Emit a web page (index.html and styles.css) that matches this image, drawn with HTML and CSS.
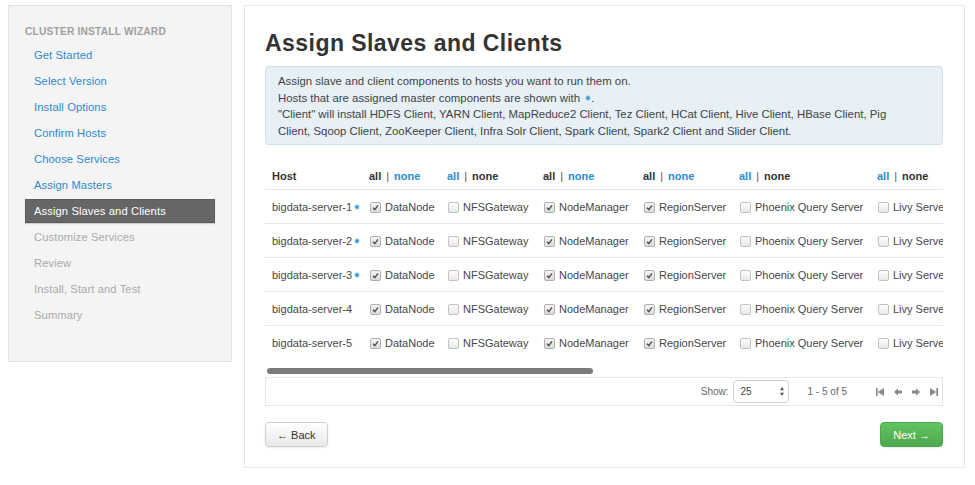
FILE: index.html
```html
<!DOCTYPE html>
<html>
<head>
<meta charset="utf-8">
<title>Assign Slaves and Clients</title>
<link rel="stylesheet" href="styles.css">
</head>
<body>
<div class="page">
  <aside class="sidebar">
    <div class="wiz-title">Cluster Install Wizard</div>
    <ul class="nav">
      <li><a href="#">Get Started</a></li>
      <li><a href="#">Select Version</a></li>
      <li><a href="#">Install Options</a></li>
      <li><a href="#">Confirm Hosts</a></li>
      <li><a href="#">Choose Services</a></li>
      <li><a href="#">Assign Masters</a></li>
      <li class="active">Assign Slaves and Clients</li>
      <li class="disabled">Customize Services</li>
      <li class="disabled">Review</li>
      <li class="disabled">Install, Start and Test</li>
      <li class="disabled">Summary</li>
    </ul>
  </aside>

  <main class="main">
    <h2 class="title">Assign Slaves and Clients</h2>
    <div class="alert">
      Assign slave and client components to hosts you want to run them on.<br>
      Hosts that are assigned master components are shown with <svg class="star" viewBox="0 0 8 8"><path d="M4 0.6V7.4M1.1 2.3L6.9 5.7M6.9 2.3L1.1 5.7"/></svg>.<br>
      "Client" will install HDFS Client, YARN Client, MapReduce2 Client, Tez Client, HCat Client, Hive Client, HBase Client, Pig<br>
      Client, Sqoop Client, ZooKeeper Client, Infra Solr Client, Spark Client, Spark2 Client and Slider Client.
    </div>

    <div class="grid-wrap">
      <table class="grid">
        <colgroup>
          <col class="c-host"><col class="c-dn"><col class="c-nfs"><col class="c-nm"><col class="c-rs"><col class="c-phx"><col class="c-livy">
        </colgroup>
        <thead>
          <tr>
            <th class="host">Host</th>
            <th><span class="sel-txt">all</span><span class="sep">|</span><a class="lnk" href="#">none</a></th>
            <th><a class="lnk" href="#">all</a><span class="sep">|</span><span class="sel-txt">none</span></th>
            <th><span class="sel-txt">all</span><span class="sep">|</span><a class="lnk" href="#">none</a></th>
            <th><span class="sel-txt">all</span><span class="sep">|</span><a class="lnk" href="#">none</a></th>
            <th><a class="lnk" href="#">all</a><span class="sep">|</span><span class="sel-txt">none</span></th>
            <th><a class="lnk" href="#">all</a><span class="sep">|</span><span class="sel-txt">none</span></th>
          </tr>
        </thead>
        <tbody>
          <tr>
            <td class="host">bigdata-server-1<svg class="star" viewBox="0 0 8 8"><path d="M4 0.6V7.4M1.1 2.3L6.9 5.7M6.9 2.3L1.1 5.7"/></svg></td>
            <td><span class="cb on"><svg viewBox="0 0 9 9"><path d="M2 4.8L3.8 6.6L7 2.4"/></svg></span>DataNode</td>
            <td><span class="cb"></span>NFSGateway</td>
            <td><span class="cb on"><svg viewBox="0 0 9 9"><path d="M2 4.8L3.8 6.6L7 2.4"/></svg></span>NodeManager</td>
            <td><span class="cb on"><svg viewBox="0 0 9 9"><path d="M2 4.8L3.8 6.6L7 2.4"/></svg></span>RegionServer</td>
            <td><span class="cb"></span>Phoenix Query Server</td>
            <td><span class="cb"></span>Livy Server</td>
          </tr>
          <tr>
            <td class="host">bigdata-server-2<svg class="star" viewBox="0 0 8 8"><path d="M4 0.6V7.4M1.1 2.3L6.9 5.7M6.9 2.3L1.1 5.7"/></svg></td>
            <td><span class="cb on"><svg viewBox="0 0 9 9"><path d="M2 4.8L3.8 6.6L7 2.4"/></svg></span>DataNode</td>
            <td><span class="cb"></span>NFSGateway</td>
            <td><span class="cb on"><svg viewBox="0 0 9 9"><path d="M2 4.8L3.8 6.6L7 2.4"/></svg></span>NodeManager</td>
            <td><span class="cb on"><svg viewBox="0 0 9 9"><path d="M2 4.8L3.8 6.6L7 2.4"/></svg></span>RegionServer</td>
            <td><span class="cb"></span>Phoenix Query Server</td>
            <td><span class="cb"></span>Livy Server</td>
          </tr>
          <tr>
            <td class="host">bigdata-server-3<svg class="star" viewBox="0 0 8 8"><path d="M4 0.6V7.4M1.1 2.3L6.9 5.7M6.9 2.3L1.1 5.7"/></svg></td>
            <td><span class="cb on"><svg viewBox="0 0 9 9"><path d="M2 4.8L3.8 6.6L7 2.4"/></svg></span>DataNode</td>
            <td><span class="cb"></span>NFSGateway</td>
            <td><span class="cb on"><svg viewBox="0 0 9 9"><path d="M2 4.8L3.8 6.6L7 2.4"/></svg></span>NodeManager</td>
            <td><span class="cb on"><svg viewBox="0 0 9 9"><path d="M2 4.8L3.8 6.6L7 2.4"/></svg></span>RegionServer</td>
            <td><span class="cb"></span>Phoenix Query Server</td>
            <td><span class="cb"></span>Livy Server</td>
          </tr>
          <tr>
            <td class="host">bigdata-server-4</td>
            <td><span class="cb on"><svg viewBox="0 0 9 9"><path d="M2 4.8L3.8 6.6L7 2.4"/></svg></span>DataNode</td>
            <td><span class="cb"></span>NFSGateway</td>
            <td><span class="cb on"><svg viewBox="0 0 9 9"><path d="M2 4.8L3.8 6.6L7 2.4"/></svg></span>NodeManager</td>
            <td><span class="cb on"><svg viewBox="0 0 9 9"><path d="M2 4.8L3.8 6.6L7 2.4"/></svg></span>RegionServer</td>
            <td><span class="cb"></span>Phoenix Query Server</td>
            <td><span class="cb"></span>Livy Server</td>
          </tr>
          <tr>
            <td class="host">bigdata-server-5</td>
            <td><span class="cb on"><svg viewBox="0 0 9 9"><path d="M2 4.8L3.8 6.6L7 2.4"/></svg></span>DataNode</td>
            <td><span class="cb"></span>NFSGateway</td>
            <td><span class="cb on"><svg viewBox="0 0 9 9"><path d="M2 4.8L3.8 6.6L7 2.4"/></svg></span>NodeManager</td>
            <td><span class="cb on"><svg viewBox="0 0 9 9"><path d="M2 4.8L3.8 6.6L7 2.4"/></svg></span>RegionServer</td>
            <td><span class="cb"></span>Phoenix Query Server</td>
            <td><span class="cb"></span>Livy Server</td>
          </tr>
        </tbody>
      </table>
    </div>
    <div class="hscroll"><div class="thumb"></div></div>

    <div class="pager">
      <span class="show">Show:</span>
      <div class="sel"><span>25</span><svg class="updown" viewBox="0 0 4 9"><path d="M2 0L4 3.3H0Z M2 9L0 5.7H4Z"/></svg></div>
      <span class="range">1 - 5 of 5</span>
      <div class="pg-icons">
        <svg viewBox="0 0 8 8"><rect x="0" y="0" width="1.7" height="8"/><path d="M1.7 4L8 0V8Z"/></svg>
        <svg viewBox="0 0 8 8"><path d="M0 4L4 0.3V2.6H8V5.4H4V7.7Z"/></svg>
        <svg viewBox="0 0 8 8"><path d="M8 4L4 0.3V2.6H0V5.4H4V7.7Z"/></svg>
        <svg viewBox="0 0 8 8"><rect x="6.3" y="0" width="1.7" height="8"/><path d="M6.3 4L0 0V8Z"/></svg>
      </div>
    </div>

    <div class="actions">
      <button class="btn">← Back</button>
      <button class="btn btn-success">Next →</button>
    </div>
  </main>
</div>
</body>
</html>
```
FILE: styles.css
```css
html, body {
  margin: 0;
  padding: 0;
  background: #fff;
}
body {
  font-family: "Liberation Sans", Arial, Helvetica, sans-serif;
  font-size: 11px;
  color: #333;
}
.page {
  display: flex;
  align-items: flex-start;
  gap: 12px;
  padding: 5px 0 0 8px;
}

/* Sidebar */
.sidebar {
  width: 224px;
  height: 357px;
  box-sizing: border-box;
  background: #f4f4f4;
  border: 1px solid #e4e4e4;
  padding: 19px 16px 0 16px;
}
.wiz-title {
  font-size: 10.2px;
  font-weight: bold;
  color: #a0a0a0;
  line-height: 14px;
  text-transform: uppercase;
  letter-spacing: 0.2px;
  margin-bottom: 4px;
}
.nav {
  list-style: none;
  margin: 0;
  padding: 0;
}
.nav li {
  height: 24px;
  line-height: 24px;
  margin-bottom: 2px;
  padding-left: 9px;
  font-size: 11.2px;
  letter-spacing: 0.1px;
}
.nav a {
  color: #2e89d0;
  text-decoration: none;
}
.nav li.active {
  background: #666;
  color: #fff;
  box-shadow: inset 0 0 0 1px #5b5b5b, 0 1px 1px rgba(0,0,0,0.15);
}
.nav li.disabled {
  color: #aaa;
}

/* Main panel */
.main {
  width: 721px;
  min-height: 463px;
  box-sizing: border-box;
  border: 1px solid #e8e8e8;
  padding: 0 21px 19px 20px;
}
.title {
  margin: 23px 0 9px;
  font-size: 23px;
  line-height: 28px;
  font-weight: bold;
  letter-spacing: 0.45px;
  color: #333;
}
.alert {
  background: #e7f0f5;
  border: 1px solid #d2e2eb;
  border-radius: 3px;
  padding: 6px 14px 5px 12px;
  line-height: 16.5px;
  font-size: 11.4px;
  color: #3e4347;
  white-space: nowrap;
}
.star {
  width: 6px;
  height: 6px;
  margin-left: 2px;
  vertical-align: 1px;
}
.star path {
  stroke: #3a9ad4;
  stroke-width: 1.7;
  fill: none;
}

/* Grid */
.grid-wrap {
  margin-top: 18px;
  width: 678px;
  overflow: hidden;
}
.grid {
  border-collapse: separate;
  border-spacing: 0;
  table-layout: fixed;
  width: 752px;
}
.c-host { width: 104px; }
.c-dn { width: 78px; }
.c-nfs { width: 96px; }
.c-nm { width: 100px; }
.c-rs { width: 96px; }
.c-phx { width: 138px; }
.c-livy { width: 140px; }
.grid th {
  height: 26px;
  padding: 0;
  text-align: left;
  vertical-align: middle;
  font-weight: bold;
  color: #333;
  border-bottom: 1px solid #e3e3e3;
  white-space: nowrap;
}
.grid th.host {
  padding-left: 7px;
}
.grid td {
  height: 33px;
  padding: 0;
  vertical-align: middle;
  color: #474747;
  border-bottom: 1px solid #e6e6e6;
  white-space: nowrap;
}
.grid tbody tr:last-child td {
  border-bottom: none;
}
.grid td.host {
  padding-left: 7px;
}
.sep {
  color: #555;
  font-weight: normal;
  margin: 0 5px;
}
.lnk {
  color: #2a8ad2;
  text-decoration: none;
}
.sel-txt {
  color: #333;
}
.cb {
  display: inline-block;
  width: 9px;
  height: 9px;
  border: 1px solid #c2c2c2;
  border-radius: 2px;
  background: linear-gradient(#fdfdfd, #e8e8e8);
  vertical-align: -2px;
  margin: 0 4px 0 1px;
}
.cb.on {
  border-color: #b0b0b0;
  background: linear-gradient(#f4f4f4, #dcdcdc);
}
.cb svg {
  display: block;
  width: 9px;
  height: 9px;
}
.cb svg path {
  fill: none;
  stroke: #505050;
  stroke-width: 1.4;
}

/* fake horizontal scrollbar */
.hscroll {
  margin-top: 9px;
  height: 6px;
}
.thumb {
  width: 326px;
  height: 6px;
  margin-left: 2px;
  border-radius: 3px;
  background: #7b7b7b;
}

/* Pager */
.pager {
  margin-top: 3px;
  height: 29px;
  box-sizing: border-box;
  border: 1px solid #e8e8e8;
  display: flex;
  align-items: center;
  justify-content: flex-end;
  padding-right: 4px;
  font-size: 10px;
  color: #666;
}
.show {
  margin-right: 4px;
}
.sel {
  width: 56px;
  height: 23px;
  box-sizing: border-box;
  border: 1px solid #d0d0d0;
  border-radius: 4px;
  display: flex;
  align-items: center;
  justify-content: space-between;
  padding: 0 4px 0 7px;
  color: #444;
  background: #fff;
}
.updown {
  width: 4px;
  height: 9px;
}
.updown path {
  fill: #555;
}
.range {
  margin-left: 19px;
}
.pg-icons {
  display: flex;
  gap: 10px;
  margin-left: 29px;
}
.pg-icons svg {
  width: 8px;
  height: 8px;
  fill: #8a8a8a;
}

/* Buttons */
.actions {
  display: flex;
  justify-content: space-between;
  margin-top: 16px;
}
.btn {
  height: 25px;
  box-sizing: border-box;
  padding: 0 11px;
  border: 1px solid #cfcfcf;
  border-radius: 4px;
  background: linear-gradient(#ffffff, #e7e7e7);
  font-family: "Liberation Sans", Arial, sans-serif;
  font-size: 11px;
  color: #333;
  box-shadow: 0 1px 2px rgba(0,0,0,0.08);
}
.btn-success {
  padding: 0 12px;
  border-color: #4fa64f;
  background: linear-gradient(#62c462, #4ea84e);
  color: #fff;
}
```
